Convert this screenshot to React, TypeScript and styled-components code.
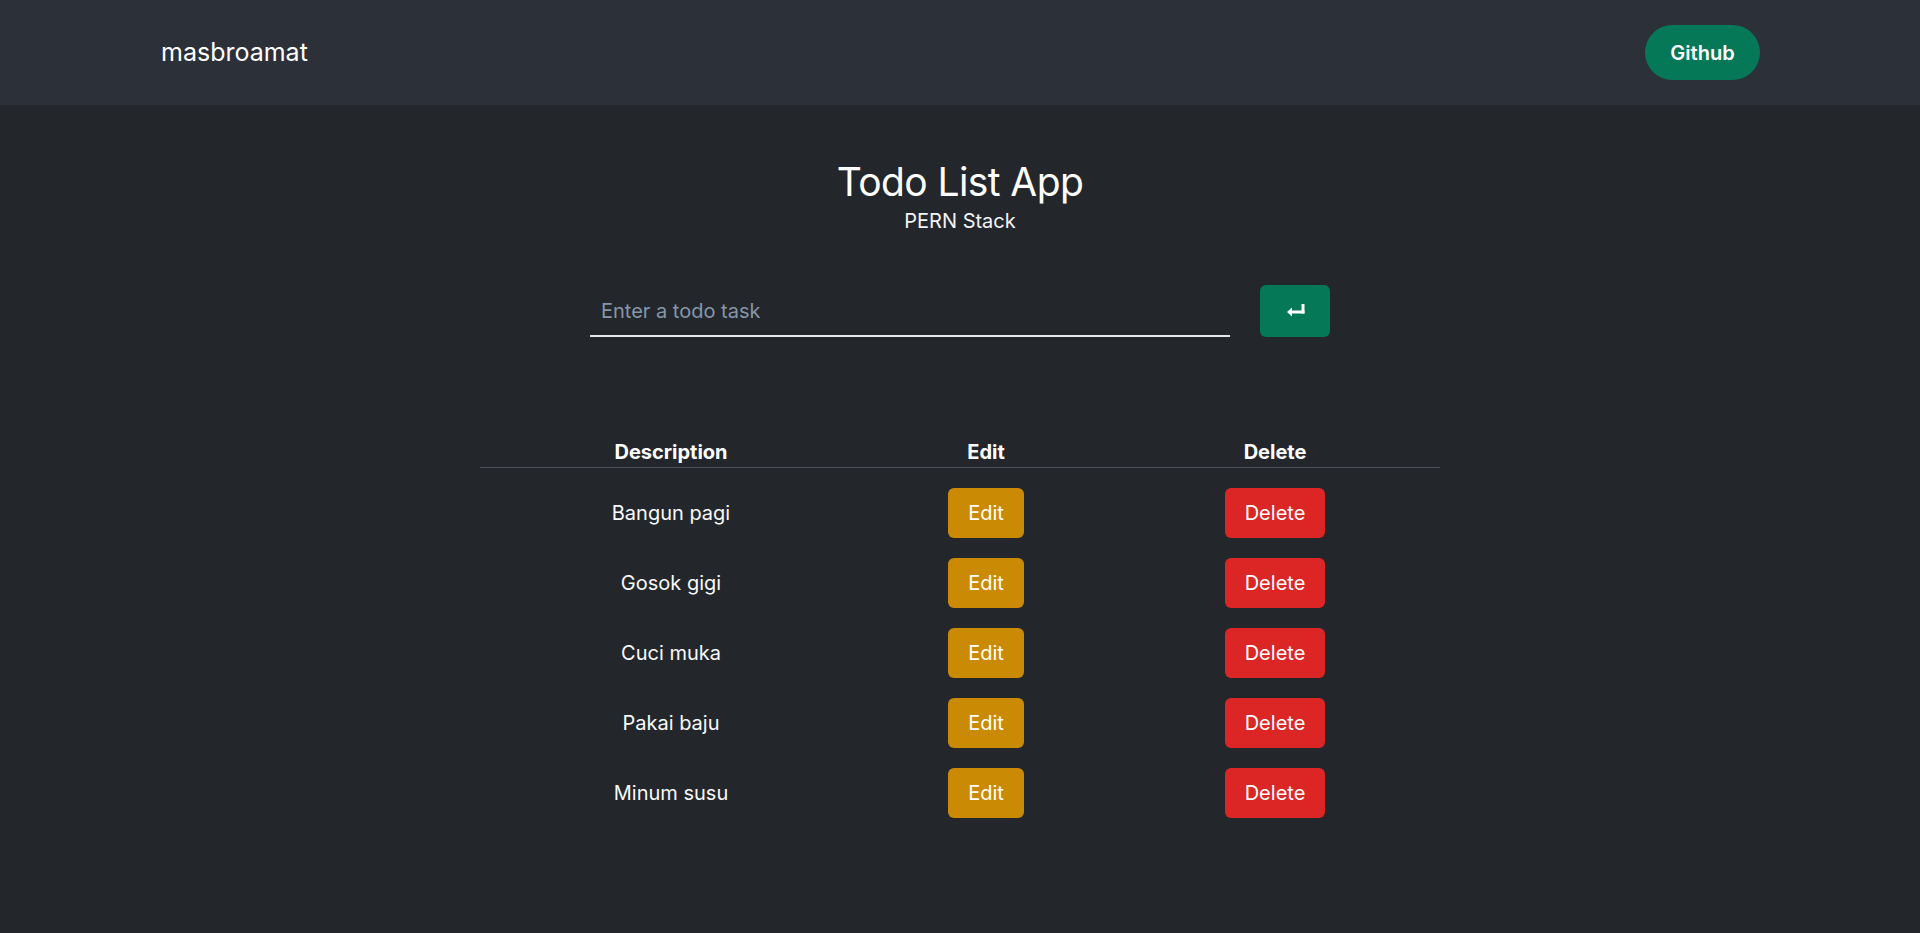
import React from "react";
import styled, { createGlobalStyle } from "styled-components";

const GlobalStyle = createGlobalStyle`
  * { box-sizing: border-box; }
  html, body { margin: 0; padding: 0; }
  body {
    background: #23272c;
    color: #ffffff;
    font-family: Inter, "Noto Sans", "Liberation Sans", sans-serif;
    min-height: 100vh;
  }
`;

const Page = styled.div`
  min-height: 100vh;
  background: #23272c;
`;

const Navbar = styled.nav`
  height: 105px;
  background: #2c3038;
  display: flex;
  align-items: center;
  justify-content: space-between;
  padding: 0 160px 0 161px;
`;

const Brand = styled.span`
  font-size: 25px;
  color: #ffffff;
  line-height: 1;
`;

const PillButton = styled.a`
  width: 115px;
  height: 55px;
  border-radius: 28px;
  background: #047857;
  color: #ffffff;
  font-size: 20px;
  font-weight: 600;
  display: flex;
  align-items: center;
  justify-content: center;
  text-decoration: none;
`;

const Main = styled.main`
  display: flex;
  flex-direction: column;
  align-items: center;
  padding-top: 53px;
`;

const Title = styled.h1`
  margin: 0;
  font-size: 39px;
  font-weight: 400;
  line-height: 48px;
  letter-spacing: -0.6px;
`;

const Subtitle = styled.p`
  margin: 0;
  font-size: 20px;
  line-height: 30px;
  color: #f3f4f6;
`;

const Form = styled.form`
  display: flex;
  align-items: stretch;
  gap: 30px;
  margin-top: 49px;
`;

const TaskInput = styled.input`
  width: 640px;
  height: 52px;
  background: transparent;
  border: none;
  border-bottom: 2px solid #e5e7eb;
  outline: none;
  color: #ffffff;
  font-family: inherit;
  font-size: 20px;
  padding: 2px 11px 0;
  &::placeholder { color: #8796a8; }
`;

const EnterButton = styled.button`
  width: 70px;
  height: 52px;
  border: none;
  border-radius: 6px;
  background: #047857;
  display: flex;
  align-items: center;
  justify-content: center;
  cursor: pointer;
  padding: 0 0 2px 2px;
`;

const Table = styled.div`
  width: 960px;
  margin-top: 84px;
  display: flex;
  flex-direction: column;
`;

const HeadRow = styled.div`
  display: grid;
  grid-template-columns: 382px 248px 330px;
  padding: 16px 0 0;
  border-bottom: 1px solid #4b505a;
`;

const HeadCell = styled.div`
  font-size: 20px;
  font-weight: 700;
  line-height: 30px;
  text-align: center;
`;

const Body = styled.div`
  padding-top: 10px;
  display: flex;
  flex-direction: column;
`;

const Row = styled.div`
  display: grid;
  grid-template-columns: 382px 248px 330px;
  height: 70px;
  align-items: center;
`;

const Cell = styled.div`
  font-size: 20px;
  line-height: 30px;
  text-align: center;
  color: #f8f9fa;
  display: flex;
  justify-content: center;
`;

const ActionButton = styled.button<{ $variant: "edit" | "delete" }>`
  height: 50px;
  padding: 0 20px;
  border: none;
  border-radius: 6px;
  background: ${(p) => (p.$variant === "edit" ? "#ca8a04" : "#dc2626")};
  color: #ffffff;
  font-family: inherit;
  font-size: 20px;
  cursor: pointer;
`;

const EnterIcon = () => (
  <svg width="18" height="13" viewBox="0 0 18 13" fill="#ffffff">
    <rect x="14.5" y="0" width="3" height="9.5" />
    <rect x="4" y="6.5" width="13.5" height="3" />
    <polygon points="0,8 5,3.5 5,12.5" />
  </svg>
);

const todos = ["Bangun pagi", "Gosok gigi", "Cuci muka", "Pakai baju", "Minum susu"];

export default function App() {
  return (
    <Page>
      <GlobalStyle />
      <Navbar>
        <Brand>masbroamat</Brand>
        <PillButton href="#">Github</PillButton>
      </Navbar>
      <Main>
        <Title>Todo List App</Title>
        <Subtitle>PERN Stack</Subtitle>
        <Form onSubmit={(e) => e.preventDefault()}>
          <TaskInput placeholder="Enter a todo task" />
          <EnterButton type="submit" aria-label="Add">
            <EnterIcon />
          </EnterButton>
        </Form>
        <Table>
          <HeadRow>
            <HeadCell>Description</HeadCell>
            <HeadCell>Edit</HeadCell>
            <HeadCell>Delete</HeadCell>
          </HeadRow>
          <Body>
            {todos.map((t) => (
              <Row key={t}>
                <Cell>{t}</Cell>
                <Cell>
                  <ActionButton $variant="edit">Edit</ActionButton>
                </Cell>
                <Cell>
                  <ActionButton $variant="delete">Delete</ActionButton>
                </Cell>
              </Row>
            ))}
          </Body>
        </Table>
      </Main>
    </Page>
  );
}
